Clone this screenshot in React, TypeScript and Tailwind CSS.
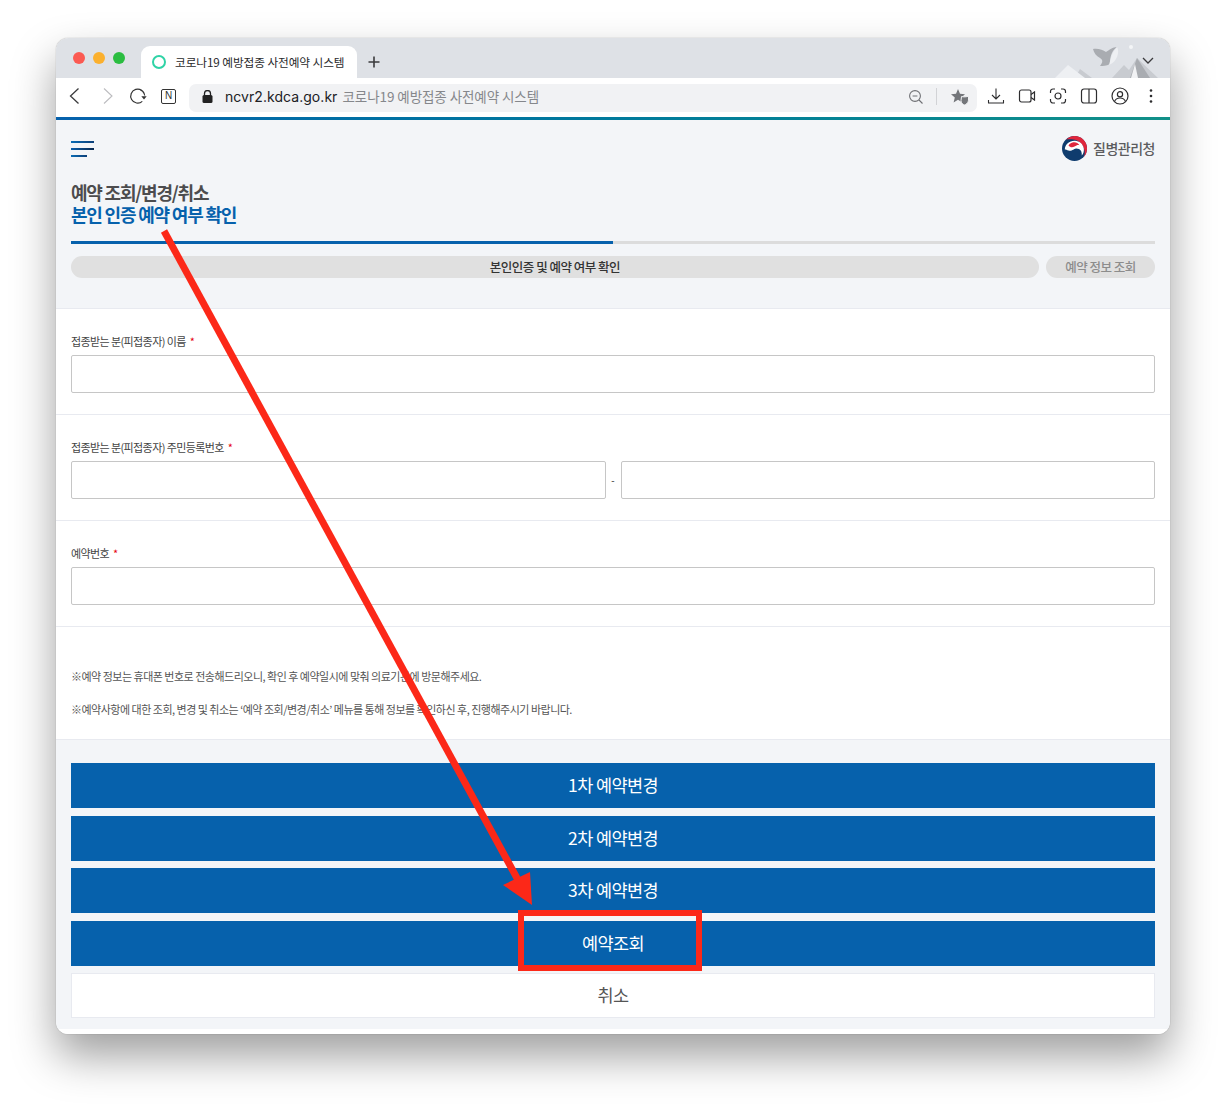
const KR = "font-['Noto_Sans_CJK_KR','Noto_Sans',sans-serif]";

function Toolbar() {
  return (
    <div className="flex h-[39px] items-center rounded-t-[9px] bg-white pb-[3px] pl-[12px]">
      <svg width="14" height="18" viewBox="0 0 14 18" fill="none" stroke="#3c3c3e" strokeWidth="1.3">
        <path d="M10.500 1.500 2.500 9l8 7.500" />
      </svg>
      <svg width="14" height="18" viewBox="0 0 14 18" fill="none" stroke="#bcbcbf" strokeWidth="1.1" className="ml-[19px]">
        <path d="M3 1.500 11 9l-8 7.500" />
      </svg>
      <svg width="18" height="18" viewBox="0 0 18 18" fill="none" stroke="#333" strokeWidth="1.2" className="ml-[14px]">
        <path d="M15.700 8.500a7 7 0 1 0-2.400 5.900M11 2.600c2 .7 3.600 2.300 4.400 4.400" />
        <path d="M12.300 9.300h5.400l-2.700 3.200z" fill="#333" stroke="none" />
      </svg>
      <div className="ml-[14px] flex h-[15px] w-[15px] items-center justify-center rounded-[2px] border border-[#333] font-['Liberation_Sans',sans-serif] text-[10px] leading-none text-[#333]">
        N
      </div>
      <div className="ml-[13px] mt-[4px] flex h-[28px] w-[788px] items-center rounded-[7px] bg-[#f1f2f4] pb-[3px]">
        <svg width="11" height="13" viewBox="0 0 11 13" className="ml-[13px]" fill="#222">
          <rect x="0.5" y="5" width="10" height="8" rx="1.5" />
          <path d="M2.500 5.500V3.600a3 3 0 0 1 6 0v1.900" fill="none" stroke="#222" strokeWidth="1.3" />
        </svg>
        <span className="ml-[12px] font-['Inter',sans-serif] text-[14px] tracking-[0.05px] text-[#202124]">ncvr2.kdca.go.kr</span>
        <span className={`ml-[5px] ${KR} text-[13.500px] tracking-[-0.07px] text-[#85878b]`}>코로나19 예방접종 사전예약 시스템</span>
        <svg width="16" height="16" viewBox="0 0 16 16" fill="none" stroke="#6f7074" strokeWidth="1.1" className="ml-auto">
          <circle cx="7" cy="7" r="5.400" />
          <path d="M4.600 7h4.800M11 11l3.500 3.500" />
        </svg>
        <div className="ml-[12px] h-[17px] w-px bg-[#d2d3d6]" />
        <svg width="20" height="18" viewBox="0 0 20 18" fill="#74767a" className="ml-[13px] mr-[7px]">
          <path d="M8 1l2 4.800 5 .4-3.800 3.300 1.200 5L8 11.800l-4.400 2.700 1.200-5L1 6.200l5-.4z" />
          <path d="M11.500 8.500c2 .6 5 .4 7-.3v4c0 3-3 4.400-4 4.800-1.500-.5-3.500-1.800-3.500-4.500z" stroke="#f1f2f4" strokeWidth="1" />
        </svg>
      </div>
      <div className="ml-[10px] flex items-center gap-[13px]">
        <svg width="18" height="18" viewBox="0 0 18 18" fill="none" stroke="#2d2d2f" strokeWidth="1.100">
          <path d="M9 1.500v10M5 8l4 4 4-4M1.500 13v3h15v-3" />
        </svg>
        <svg width="18" height="18" viewBox="0 0 18 18" fill="none" stroke="#2d2d2f" strokeWidth="1.200">
          <rect x="1.500" y="3" width="11.500" height="12" rx="2" />
          <path d="M13 7.500l3.500-2.500v8L13 10.500" />
        </svg>
        <svg width="18" height="18" viewBox="0 0 18 18" fill="none" stroke="#2d2d2f" strokeWidth="1.200">
          <path d="M6 2H4a2.500 2.500 0 0 0-2.500 2.500V6M12 2h2a2.500 2.500 0 0 1 2.500 2.500V6M6 16H4a2.500 2.500 0 0 1-2.500-2.500V12M12 16h2a2.500 2.500 0 0 0 2.500-2.500V12" />
          <circle cx="9" cy="9" r="3" />
        </svg>
        <svg width="18" height="18" viewBox="0 0 18 18" fill="none" stroke="#2d2d2f" strokeWidth="1.200">
          <rect x="1.500" y="2" width="15" height="14" rx="2.500" />
          <path d="M9 2v14" />
        </svg>
        <svg width="18" height="18" viewBox="0 0 18 18" fill="none" stroke="#2d2d2f" strokeWidth="1.200">
          <circle cx="9" cy="9" r="8" />
          <circle cx="9" cy="7.200" r="2.600" />
          <path d="M3.500 14.500c1-2.500 3-3.500 5.500-3.500s4.500 1 5.500 3.500" />
        </svg>
        <svg width="12" height="18" viewBox="0 0 12 18" fill="#2d2d2f" className="ml-[3px]">
          <circle cx="6" cy="3.500" r="1.300" />
          <circle cx="6" cy="9" r="1.300" />
          <circle cx="6" cy="14.500" r="1.300" />
        </svg>
      </div>
    </div>
  );
}

function TabBar() {
  return (
    <div className="relative flex h-[40px] items-end overflow-hidden rounded-t-[12px] bg-[#dee1e6] pl-[85px]">
      <div className="absolute left-[17px] top-[14px] flex gap-[8px]">
        <div className="h-[12px] w-[12px] rounded-full bg-[#fb5a52]" />
        <div className="h-[12px] w-[12px] rounded-full bg-[#fbb02e]" />
        <div className="h-[12px] w-[12px] rounded-full bg-[#2bbd41]" />
      </div>
      <div className="flex h-[32px] w-[216px] items-center rounded-t-[9px] bg-white pl-[11px]">
        <div className="h-[14px] w-[14px] rounded-full border-2 border-[#2fd3a6]" />
        <span className={`ml-[9px] ${KR} text-[11.700px] tracking-[-0.1px] text-[#2a2a2c]`}>코로나19 예방접종 사전예약 시스템</span>
      </div>
      <svg width="14" height="14" viewBox="0 0 14 14" stroke="#3a3a3c" strokeWidth="1.600" className="mb-[9px] ml-[10px]">
        <path d="M7 1.500v11M1.500 7h11" />
      </svg>
      <svg width="110" height="40" viewBox="0 0 110 40" className="absolute right-[10px] top-0">
        <path d="M62 40 74 27 79 32 87 20 108 40Z" fill="#c8cbd0" />
        <path d="M80 40 87 20 100 40Z" fill="#a9acb1" />
        <path d="M25 40 30 31 42 40Z" fill="#c8cbd0" />
        <path d="M5 40 18 27 35 40Z" fill="#eef0f3" />
        <path d="M81 40 85 26 88 40Z" fill="#f1f2f4" />
        <path d="M43 11C48 10 53 12 56 14 59 12 63 9 67 9 63 12 60 16 60 26 56 28 53 28 50 28 53 24 53 22 50 20 46 18 44 15 43 11Z" fill="#a9acb1" />
        <path d="M67 9C70 14 67 24 59 27 61 20 62 14 67 9Z" fill="#eef0f3" />
        <circle cx="81" cy="9" r="2" fill="#f4f5f7" />
      </svg>
      <svg width="14" height="10" viewBox="0 0 14 10" fill="none" stroke="#3a3a3c" strokeWidth="1.300" className="absolute right-[15px] top-[18px]">
        <path d="M2 2l5 5 5-5" />
      </svg>
    </div>
  );
}

function PageHeader() {
  return (
    <div className="border-b border-[#e8eaf0] bg-[#f3f5f8] px-[15px] pb-[30px]">
      <div className="flex h-[56px] items-center justify-between">
        <div className="flex flex-col gap-[5px] pt-[1px]">
          <div className="h-[2px] w-[23px] bg-gradient-to-r from-[#0a6cb5] to-[#0b3f78]" />
          <div className="h-[2px] w-[23px] bg-gradient-to-r from-[#0a5eaa] to-[#08284f]" />
          <div className="h-[2px] w-[16px] bg-gradient-to-r from-[#0a6cb5] to-[#0b3f78]" />
        </div>
        <div className="flex items-center gap-[6px]">
          <svg width="25" height="25" viewBox="0 0 25 25">
            <circle cx="12.500" cy="12.500" r="12.500" fill="#0f3c6e" />
            <path d="M4 3.500C7 1 10 0 12.500 0 19.500 0 25 5.500 25 12.500c0 3-1 6-3 8.500 1-3 1-6 0-8.500C20.500 7.500 16 4 11.500 3.500 9 3.200 6.500 3.200 4 3.500z" fill="#e0263c" />
            <path d="M2.800 13.500C3 8.500 7.500 4.500 13 4.800c4.500.2 8 3.200 8.800 7.700.4 2.500-.3 5-2 7C20 16 19 14 17 13c-2.500-1-4-.5-5.500.5-2 1.300-3.500 1.500-5 1-1.500-.4-2.700-1-3.700-1z" fill="#fff" />
            <circle cx="10" cy="10.200" r="3.300" fill="#fff" />
            <path d="M6.500 9.500c1.500 2 4 2.300 6 1 2-1.200 3.500-2 5-1.200-1.500-2.400-4.300-3.500-7-2.700-1.900.6-3.400 1.500-4 2.900z" fill="#e0263c" />
          </svg>
          <span className={`${KR} text-[14px] font-medium tracking-[-0.5px] text-[#5c5c5e]`}>질병관리청</span>
        </div>
      </div>
      <h1 className={`pt-[5px] ${KR} text-[18px] font-bold leading-[22px] tracking-[-1.200px]`}>
        <span className="block text-[#4c4c4e]">예약 조회/변경/취소</span>
        <span className="block text-[#0661ac]">본인 인증 예약 여부 확인</span>
      </h1>
      <div className="mt-[16px] flex h-[3px] bg-[#dcdcdc]">
        <div className="w-1/2 bg-[#0661ac]" />
      </div>
      <div className={`mt-[12px] flex gap-[7px] ${KR} text-[12.500px] font-medium tracking-[-0.5px]`}>
        <div className="flex h-[22px] flex-1 items-center justify-center rounded-full bg-[#e0e0e0] text-[#333]">
          본인인증 및 예약 여부 확인
        </div>
        <div className="flex h-[22px] w-[109px] items-center justify-center rounded-full bg-[#e0e0e0] text-[#8c8c8c]">
          예약 정보 조회
        </div>
      </div>
    </div>
  );
}

function Field({ label, split }: { label: string; split?: boolean }) {
  return (
    <div className="h-[106px] border-b border-[#e8eaf0] px-[15px] pt-[25px]">
      <label className={`flex h-[14px] items-center ${KR} text-[11px] tracking-[-0.6px] text-[#444]`}>
        {label}
        <span className="ml-[4px] text-[#e60012]">*</span>
      </label>
      <div className="mt-[7px] flex items-center">
        <input className="h-[38px] min-w-0 flex-1 rounded-[2px] border border-[#c6c6c6] bg-white" />
        {split && (
          <>
            <span className="w-[15px] text-center font-['Liberation_Sans',sans-serif] text-[10px] text-[#555]">-</span>
            <input className="h-[38px] min-w-0 flex-1 rounded-[2px] border border-[#c6c6c6] bg-white" />
          </>
        )}
      </div>
    </div>
  );
}

function ActionButton({ label }: { label: string }) {
  return (
    <button className={`flex h-[45px] items-center justify-center bg-[#0661ac] ${KR} text-[17.500px] tracking-[-0.6px] text-white`}>
      {label}
    </button>
  );
}

export default function App() {
  return (
    <div className="relative h-[1109px] w-[1226px] overflow-hidden bg-white pl-[56px] pt-[38px]">
      <div className="flex h-[996px] w-[1114px] flex-col overflow-hidden rounded-[12px] bg-white shadow-[0_0_1px_rgba(0,0,0,0.45),0_22px_44px_rgba(0,0,0,0.38)]">
        <TabBar />
        <Toolbar />
        <div className="h-[3px] bg-gradient-to-r from-[#0661ac] to-[#119088]" />
        <PageHeader />
        <div className="bg-white">
          <Field label="접종받는 분(피접종자) 이름" />
          <Field label="접종받는 분(피접종자) 주민등록번호" split />
          <Field label="예약번호" />
          <div className={`h-[113px] border-b border-[#e8eaf0] px-[15px] pt-[41px] ${KR} text-[11px] leading-[16px] tracking-[-0.5px] text-[#555]`}>
            <p>※예약 정보는 휴대폰 번호로 전송해드리오니, 확인 후 예약일시에 맞춰 의료기관에 방문해주세요.</p>
            <p className="mt-[17px]">※예약사항에 대한 조회, 변경 및 취소는 ‘예약 조회/변경/취소’ 메뉴를 통해 정보를 확인하신 후, 진행해주시기 바랍니다.</p>
          </div>
        </div>
        <div className="flex flex-1 flex-col bg-[#f3f5f8] px-[15px] pt-[23px]">
          <div className="flex flex-col gap-[7.500px]">
            <ActionButton label="1차 예약변경" />
            <ActionButton label="2차 예약변경" />
            <ActionButton label="3차 예약변경" />
            <ActionButton label="예약조회" />
            <button className={`flex h-[45px] items-center justify-center border border-[#e8eaf0] bg-white ${KR} text-[17.500px] tracking-[-0.6px] text-[#555]`}>
              취소
            </button>
          </div>
        </div>
        <div className="h-[5px] bg-white" />
      </div>

      <svg width="1226" height="1109" viewBox="0 0 1226 1109" className="pointer-events-none absolute left-0 top-0">
        <path d="M164 231 518 880" stroke="#fc2818" strokeWidth="7" fill="none" />
        <path d="M503 885 530 872 532 905Z" fill="#fc2818" />
      </svg>
      <div className="pointer-events-none absolute left-[518px] top-[910px] h-[61px] w-[184px] border-[6px] border-[#fc2818]" />
    </div>
  );
}
